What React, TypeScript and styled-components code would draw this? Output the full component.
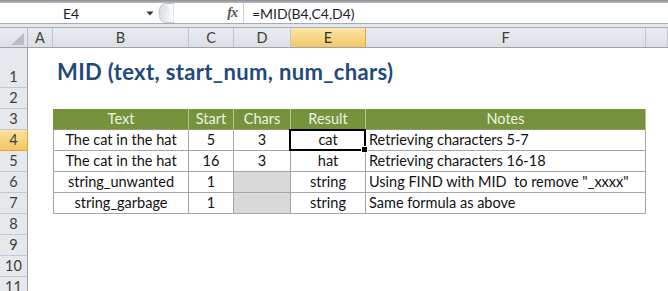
import React from 'react';
import styled, { createGlobalStyle, css } from 'styled-components';

const GlobalStyle = createGlobalStyle`
  html, body { margin: 0; padding: 0; background: #fff; overflow: hidden; }
  body { font-family: Lato, "Open Sans", sans-serif; }
`;

const Window = styled.div`
  width: 668px;
  height: 291px;
  overflow: hidden;
  background: #fff;
  display: flex;
  flex-direction: column;
`;

const TopBand = styled.div`
  height: 3px;
  flex-shrink: 0;
  background: linear-gradient(#8a8d91, #b9bcc0);
`;

const FormulaBar = styled.div`
  height: 21px;
  box-sizing: border-box;
  flex-shrink: 0;
  display: flex;
  align-items: stretch;
  background: #fff;
  border-bottom: 1px solid #a8acb1;
`;

const NameBox = styled.div`
  width: 142px;
  display: flex;
  align-items: center;
  justify-content: center;
  font-size: 14px;
  color: #1e1e1e;
`;

const DropArrow = styled.div`
  width: 16px;
  display: flex;
  align-items: center;
  justify-content: center;
`;

const Grip = styled.div`
  width: 20px;
  display: flex;
  align-items: center;
`;

const FxArea = styled.div`
  flex: 0 0 66px;
  display: flex;
  align-items: center;
  justify-content: flex-end;
  padding-right: 6px;
  box-sizing: border-box;
  border-right: 1px solid #c9ccd0;
  font-family: "Liberation Serif", "DejaVu Serif", serif;
  font-style: italic;
  font-weight: bold;
  font-size: 14px;
  color: #555;
  letter-spacing: -1px;
`;

const FormulaText = styled.div`
  flex: 1;
  display: flex;
  align-items: center;
  padding-left: 8px;
  font-size: 14px;
  color: #1e1e1e;
`;

const Splitter = styled.div`
  height: 3px;
  flex-shrink: 0;
  background: #e4e7eb;
`;

const ColumnHeaderRow = styled.div`
  height: 21px;
  box-sizing: border-box;
  flex-shrink: 0;
  display: flex;
  border-top: 1px solid #a9aeb4;
  border-bottom: 1px solid #9ea3a9;
  background: linear-gradient(#e9ecef, #dcdfe4);
`;

const ColHead = styled.div<{ $w: number; $active?: boolean }>`
  width: ${(p) => p.$w}px;
  flex-shrink: 0;
  box-sizing: border-box;
  border-right: 1px solid #c2c6cb;
  display: flex;
  align-items: center;
  justify-content: center;
  font-size: 14.5px;
  color: #3d3d3d;
  ${(p) =>
    p.$active &&
    css`
      background: linear-gradient(#fbe6a9, #f3c867);
      border-right-color: #e2a43b;
      color: #333;
    `}
`;

const Corner = styled.div`
  width: 28px;
  flex-shrink: 0;
  box-sizing: border-box;
  border-right: 1px solid #b8bcc1;
  display: flex;
  align-items: flex-end;
  justify-content: flex-end;
  padding: 0 3px 2px 0;
`;

const Body = styled.div`
  flex: 1;
  display: flex;
  min-height: 0;
`;

const RowHeaders = styled.div`
  width: 28px;
  flex-shrink: 0;
  display: flex;
  flex-direction: column;
`;

const RowHead = styled.div<{ $h: number; $active?: boolean }>`
  height: ${(p) => p.$h}px;
  flex-shrink: 0;
  box-sizing: border-box;
  border-bottom: 1px solid #c4c8cd;
  border-right: 1px solid #9ea3a9;
  background: #e5e8ec;
  display: flex;
  align-items: flex-end;
  justify-content: center;
  padding-bottom: 1px;
  font-size: 14.5px;
  line-height: 18px;
  color: #3d3d3d;
  ${(p) =>
    p.$active &&
    css`
      background: linear-gradient(#fbe2a0, #f4c45f);
      border-bottom-color: #e2a43b;
      border-right-color: #e2a43b;
    `}
`;

const Sheet = styled.div`
  flex: 1;
  display: flex;
  flex-direction: column;
`;

const TitleRow = styled.div`
  height: 40px;
  flex-shrink: 0;
  box-sizing: border-box;
  display: flex;
  align-items: flex-end;
  padding: 0 0 4px 29px;
`;

const Title = styled.div`
  font-size: 22px;
  font-weight: bold;
  line-height: 24px;
  letter-spacing: 0.35px;
  color: #1f4a7c;
`;

const SpacerRow = styled.div`
  height: 21px;
  flex-shrink: 0;
`;

const DataTable = styled.div`
  margin-left: 25px;
  display: grid;
  grid-template-columns: 136px 45px 57px 75px 280px;
  grid-auto-rows: 21px;
  width: 593px;
`;

type CellProps = {
  $head?: boolean;
  $left?: boolean;
  $first?: boolean;
  $shade?: boolean;
  $selected?: boolean;
};

const Cell = styled.div<CellProps>`
  position: relative;
  box-sizing: border-box;
  display: flex;
  align-items: flex-end;
  justify-content: ${(p) => (p.$left ? 'flex-start' : 'center')};
  padding: 0 ${(p) => (p.$left ? '0 1px 3px' : '0 1px 0')};
  font-size: 14.5px;
  line-height: 19px;
  color: #111;
  white-space: nowrap;
  border-right: 1px solid #a6a6a6;
  border-bottom: 1px solid #a6a6a6;
  ${(p) => p.$first && css`border-left: 1px solid #a6a6a6;`}
  ${(p) => p.$shade && css`background: #d9d9d9;`}
  ${(p) =>
    p.$head &&
    css`
      background: #76923c;
      color: #eef3e3;
      border-right-color: #b3c494;
      border-bottom-color: #8d9a7a;
      ${p.$first && css`border-left-color: #76923c;`}
    `}
  ${(p) =>
    p.$selected &&
    css`
      &::after {
        content: '';
        position: absolute;
        top: -1px;
        left: -2px;
        right: -1px;
        bottom: -1px;
        border: 2px solid #000;
        pointer-events: none;
      }
      &::before {
        content: '';
        position: absolute;
        right: -3px;
        bottom: -3px;
        width: 5px;
        height: 5px;
        background: #000;
        border: 1px solid #fff;
        z-index: 2;
      }
    `}
`;

const columns = [
  { key: 'A', w: 25 },
  { key: 'B', w: 136 },
  { key: 'C', w: 45 },
  { key: 'D', w: 57 },
  { key: 'E', w: 75 },
  { key: 'F', w: 280 },
  { key: '', w: 22 },
];

const rowHeights = [40, 21, 21, 21, 21, 21, 21, 21, 21, 21, 21];

const headers = ['Text', 'Start', 'Chars', 'Result', 'Notes'];

const rows: { text: string; start: string; chars: string; result: string; notes: string }[] = [
  { text: 'The cat in the hat', start: '5', chars: '3', result: 'cat', notes: 'Retrieving characters 5-7' },
  { text: 'The cat in the hat', start: '16', chars: '3', result: 'hat', notes: 'Retrieving characters 16-18' },
  { text: 'string_unwanted', start: '1', chars: '', result: 'string', notes: 'Using FIND with MID\u00a0 to remove "_xxxx"' },
  { text: 'string_garbage', start: '1', chars: '', result: 'string', notes: 'Same formula as above' },
];

export default function App() {
  return (
    <Window>
      <GlobalStyle />
      <TopBand />
      <FormulaBar>
        <NameBox>E4</NameBox>
        <DropArrow>
          <svg width="8" height="5" viewBox="0 0 8 5">
            <path d="M0.5 0.5 L7.5 0.5 L4 4.5 Z" fill="#333" />
          </svg>
        </DropArrow>
        <Grip>
          <svg width="16" height="20" viewBox="0 0 16 20">
            <defs>
              <linearGradient id="gripg" x1="0" y1="0" x2="1" y2="0">
                <stop offset="0" stopColor="#d8dbdf" />
                <stop offset="1" stopColor="#ffffff" />
              </linearGradient>
            </defs>
            <path d="M8 0.5 Q1 0.5 1 10 Q1 19.5 8 19.5 L16 19.5 L16 0.5 Z" fill="url(#gripg)" stroke="#c7cacf" strokeWidth="1" />
            <ellipse cx="7" cy="6" rx="3" ry="2.2" fill="#e4e6e9" />
          </svg>
        </Grip>
        <FxArea>fx</FxArea>
        <FormulaText>=MID(B4,C4,D4)</FormulaText>
      </FormulaBar>
      <Splitter />
      <ColumnHeaderRow>
        <Corner>
          <svg width="13" height="12" viewBox="0 0 13 12">
            <path d="M13 0 L13 12 L0 12 Z" fill="#b9bdc2" />
          </svg>
        </Corner>
        {columns.map((c, i) => (
          <ColHead key={i} $w={c.w} $active={c.key === 'E'}>
            {c.key}
          </ColHead>
        ))}
      </ColumnHeaderRow>
      <Body>
        <RowHeaders>
          {rowHeights.map((h, i) => (
            <RowHead key={i} $h={h} $active={i === 3}>
              {i + 1}
            </RowHead>
          ))}
        </RowHeaders>
        <Sheet>
          <TitleRow>
            <Title>MID (text, start_num, num_chars)</Title>
          </TitleRow>
          <SpacerRow />
          <DataTable>
            {headers.map((h, i) => (
              <Cell key={h} $head $first={i === 0}>
                {h}
              </Cell>
            ))}
            {rows.map((r, ri) => (
              <React.Fragment key={ri}>
                <Cell $first>{r.text}</Cell>
                <Cell>{r.start}</Cell>
                <Cell $shade={r.chars === ''}>{r.chars}</Cell>
                <Cell $selected={ri === 0}>{r.result}</Cell>
                <Cell $left>{r.notes}</Cell>
              </React.Fragment>
            ))}
          </DataTable>
        </Sheet>
      </Body>
    </Window>
  );
}
